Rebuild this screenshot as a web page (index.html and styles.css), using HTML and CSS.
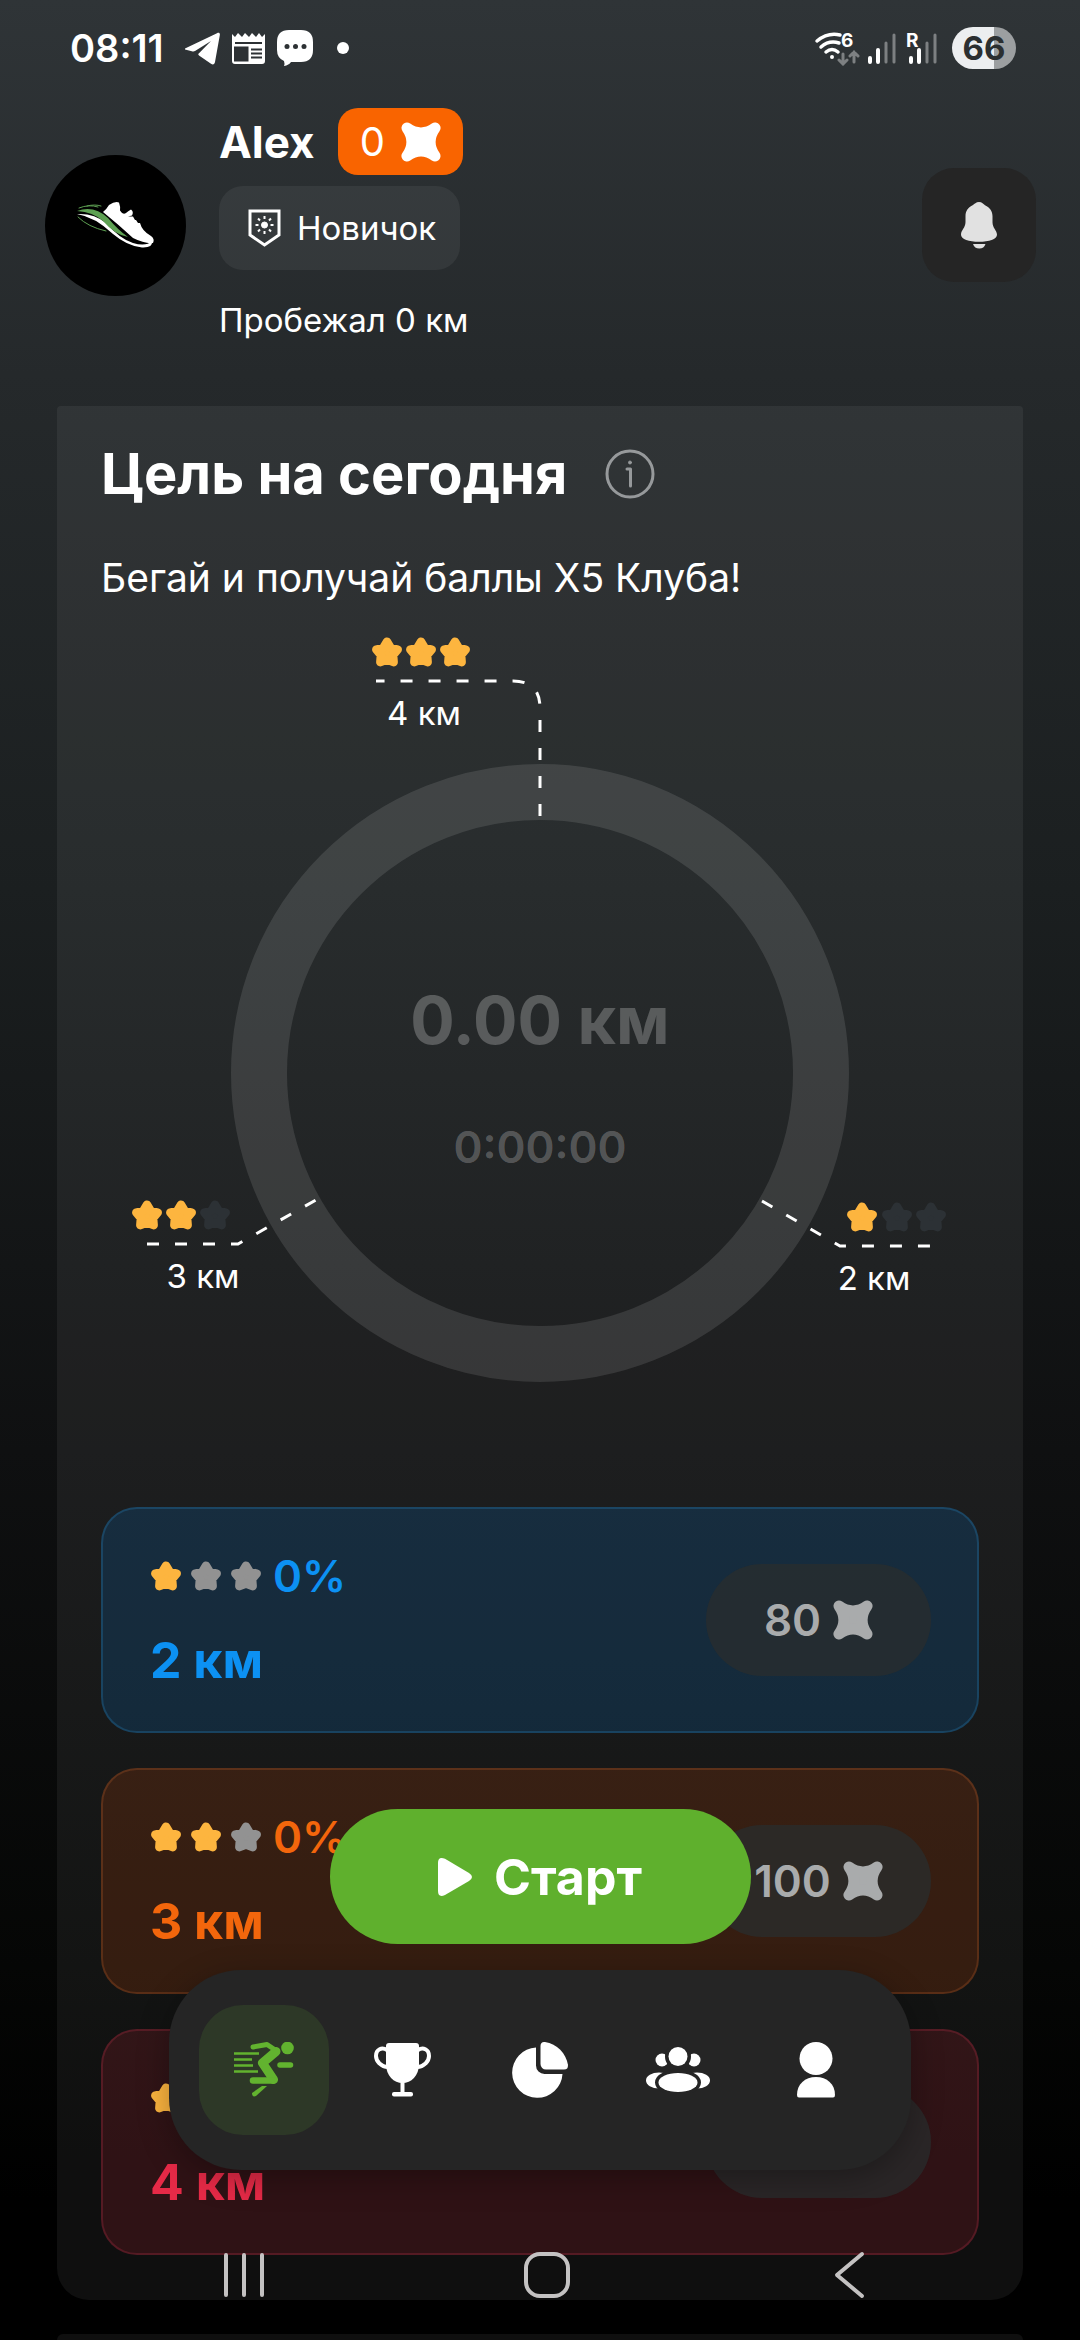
FILE: index.html
```html
<!DOCTYPE html>
<html lang="ru">
<head>
    <title>Цель на сегодня</title>
    <meta charset="UTF-8">
    <meta name="viewport" content="width=device-width, initial-scale=1.0">
    <link rel="stylesheet" href="styles.css">
</head>
<body>
    <!-- общие иконки -->
    <svg class="sprite" aria-hidden="true">
        <symbol id="star" viewBox="1 1 30 30">
            <path d="M16 6.300l3.500 5.800L26 13.700l-4.300 5.200.5 6.600L16 23l-6.200 2.500.5-6.600L6 13.700l6.500-1.600z" fill="currentColor" stroke="currentColor" stroke-width="8" stroke-linejoin="round"/>
        </symbol>
        <symbol id="coin" viewBox="0 0 40 40">
            <path d="M6 6Q20 16 34 6Q24 20 34 34Q20 24 6 34Q16 20 6 6z" fill="currentColor" stroke="currentColor" stroke-width="11" stroke-linejoin="round"/>
        </symbol>
    </svg>

    <div class="app">
        <div class="status-bar">
            <div class="status-group">
                <span class="clock">08:11</span>
                <svg class="status-app" viewBox="0 0 36 36" width="36" height="36" fill="#fff">
                    <path d="M1 18.500L33 3.200c2-1 3.200 0 2.800 2L31 32c-.5 2.500-2 3-4 1.800L15 25.500c-1-.8-1-1.500 0-2.300L27 11 11 21c-1 .6-2 .6-3.200.2L1 19.500z"/>
                </svg>
                <svg class="status-app" viewBox="0 0 33 32" width="33" height="32">
                    <path d="M0 2l3 3 3-4 4 4 3-4 4 4 3-4 4 4 3-4 3 4 3-3v27q0 3-3 3H3q-3 0-3-3z" fill="#fff"/>
                    <path d="M3 11h27M3 15.500h12.500v13H3zM19 17.500h11M19 21.500h11M19 25.500h11" fill="#2d3134" stroke="#2d3134" stroke-width="2"/>
                </svg>
                <svg class="status-app" viewBox="0 0 36 36" width="36" height="36">
                    <path d="M12 0h12q12 0 12 12v8q0 12-12 12H14q-2 3-7 4 1-2 0-5-7-3-7-11v-8Q0 0 12 0z" fill="#fff"/>
                    <g fill="#2d3134"><circle cx="10" cy="16.500" r="2.500"/><circle cx="18.500" cy="16.500" r="2.500"/><circle cx="27" cy="16.500" r="2.500"/></g>
                </svg>
                <span class="status-dot"></span>
            </div>
            <div class="status-group status-right">
                <svg viewBox="0 0 124 36" width="124" height="36" fill="none" stroke-linecap="round">
                    <g stroke="#fff" stroke-width="3.500">
                        <path d="M3 11Q14 2 26 5M7 17q8-7 18-4M12 22q6-5 12 0"/>
                        <circle cx="18" cy="27" r="1" fill="#fff" stroke-width="2"/>
                    </g>
                    <path d="M29 24v10m-4-4l4 4 4-4M40 32V22m-4 4l4-4 4 4" stroke="#7d8082" stroke-width="3"/>
                    <g stroke="#fff" stroke-width="4">
                        <path d="M56 28v4M64 20v12M97 28v4M105 20v12"/>
                    </g>
                    <g stroke="#7d8082" stroke-width="3">
                        <path d="M72 13v19M80 5v27M113 13v19M121 5v27"/>
                    </g>
                    <text x="27" y="17" class="status-mini">6</text>
                    <text x="92" y="17" class="status-mini">R</text>
                </svg>
                <span class="battery">66</span>
            </div>
        </div>

        <header class="header">
            <div class="avatar">
                <svg viewBox="0 0 141 141" fill="none" stroke-linecap="round">
                    <path d="M58 57q3-2 6-7 6-4 10-2.500 1.500 4 1 8 3 5 6 2.500 2-2 5-3.500 3 2 1 6l-4 1h5l2 3.500h-5 6l2 3h-5 7q2 8 11 13 4 3 2 7-8 1-20-5Q74 70 58 57z" fill="#fff"/>
                    <path d="M32 59q17-1 29 9 14 16 27 20 13 4 19-2 1 7-10 6.500Q82 91 68 79 50 62 32 59z" fill="#fff"/>
                    <path d="M32 56q17-6 31 7 10 12 20 19Q70 80 58 66 48 57 32 56z" fill="#5da052"/>
                    <path d="M34 53q10-4 19-1M42 51q8-2 14 0M33 62q10 10 28 14" stroke="#5da052" stroke-width="1"/>
                </svg>
            </div>
            <div class="profile">
                <div class="profile-name">
                    <h1>Alex</h1>
                    <span class="balance">0 <svg><use href="#coin"/></svg></span>
                </div>
                <div class="level">
                    <svg viewBox="0 0 33 38" width="33" height="38" fill="none" stroke="#fff" stroke-width="3">
                        <path d="M2 2h29v24L16.500 36 2 26z"/>
                        <circle cx="16.500" cy="16" r="3" fill="#fff" stroke-width="1"/>
                        <path d="M16.500 7v3M16.500 22v3M7.500 16h3M22.500 16h3M10 9.500l2 2M23 9.500l-2 2M10 22.500l2-2M23 22.500l-2-2" stroke-width="2"/>
                    </svg>
                    Новичок
                </div>
                <p class="distance">Пробежал 0 км</p>
            </div>
            <button class="bell-btn" aria-label="Уведомления">
                <svg viewBox="0 0 36 47" width="36" height="47" fill="#e1e1e1">
                    <path d="M18 0c3 0 4.500 2 6 3.200 5 2.500 7.500 6 7.500 11v6c0 6 4.500 8 4.500 12.500 0 4.500-8 7-18 7s-18-2.500-18-7C0 28 4.500 26 4.500 20v-6c0-5 2.500-8.500 7.500-11C13.500 2 15 0 18 0z"/>
                    <path d="M12 42h12.500c-1 3-3 4.500-6.200 4.500S13 45 12 42z"/>
                </svg>
            </button>
        </header>

        <main class="card">
            <div class="card-title">
                <h2>Цель на сегодня</h2>
                <button class="info-btn" aria-label="Информация">
                    <svg viewBox="0 0 50 50" fill="none" stroke="#96999b" stroke-width="3" stroke-linecap="round" stroke-linejoin="round">
                        <circle cx="25" cy="25" r="23"/>
                        <path d="M22 20h3.500v17"/>
                        <circle cx="25" cy="13.500" r="1.500" fill="#96999b" stroke-width="1"/>
                    </svg>
                </button>
            </div>
            <p class="card-text">Бегай и получай баллы X5 Клуба!</p>

            <svg class="chart" viewBox="0 0 878 787">
                <circle class="chart-ring" cx="439" cy="453" r="281"/>
                <g class="chart-line">
                    <path d="M439 196V88Q439 61 412 61H275"/>
                    <path d="M46 624H137L215 580"/>
                    <path d="M661 581L739 626H830"/>
                </g>
                <g class="star-on">
                    <use href="#star" x="270" y="16" width="32" height="32"/>
                    <use href="#star" x="304" y="16" width="32" height="32"/>
                    <use href="#star" x="338" y="16" width="32" height="32"/>
                    <use href="#star" x="30" y="579" width="32" height="32"/>
                    <use href="#star" x="64" y="579" width="32" height="32"/>
                    <use href="#star" x="745" y="581" width="32" height="32"/>
                </g>
                <g class="star-dim">
                    <use href="#star" x="98" y="579" width="32" height="32"/>
                    <use href="#star" x="780" y="581" width="32" height="32"/>
                    <use href="#star" x="814" y="581" width="32" height="32"/>
                </g>
                <text class="chart-label" x="323" y="105">4 км</text>
                <text class="chart-label" x="102" y="668">3 км</text>
                <text class="chart-label" x="773" y="670">2 км</text>
                <text class="chart-km" x="439" y="424">0.00 км</text>
                <text class="chart-time" x="439" y="543">0:00:00</text>
            </svg>

            <div class="goals">
                <section class="goal goal-blue">
                    <div class="goal-info">
                        <div class="goal-stars">
                            <svg class="star-on"><use href="#star"/></svg>
                            <svg><use href="#star"/></svg>
                            <svg><use href="#star"/></svg>
                            <span>0%</span>
                        </div>
                        <strong>2 км</strong>
                    </div>
                    <div class="reward">80 <svg><use href="#coin"/></svg></div>
                </section>
                <section class="goal goal-orange">
                    <div class="goal-info">
                        <div class="goal-stars">
                            <svg class="star-on"><use href="#star"/></svg>
                            <svg class="star-on"><use href="#star"/></svg>
                            <svg><use href="#star"/></svg>
                            <span>0%</span>
                        </div>
                        <strong>3 км</strong>
                    </div>
                    <div class="reward">100 <svg><use href="#coin"/></svg></div>
                </section>
                <section class="goal goal-red">
                    <div class="goal-info">
                        <div class="goal-stars">
                            <svg class="star-on"><use href="#star"/></svg>
                        </div>
                        <strong>4 км</strong>
                    </div>
                    <div class="reward"></div>
                </section>
            </div>
        </main>
        <section class="card card-next"></section>
    </div>

    <div class="dock">
        <button class="start-btn">
            <svg viewBox="0 0 34 38" width="34" height="38" fill="#fff">
                <path d="M0 5Q0-2 7 .8L31 15q6 4 0 8L7 37Q0 40 0 33z"/>
            </svg>
            Старт
        </button>

        <nav class="tabs">
            <a href="#run" class="active" aria-label="Бег">
                <svg viewBox="0 0 60 56" width="60" height="56" fill="none" stroke="#62b32f" stroke-linecap="round" stroke-linejoin="round">
                    <circle cx="53.500" cy="6" r="6.300" fill="#62b32f" stroke="none"/>
                    <path d="M19 5l14-2.500 9 6" stroke-width="5"/>
                    <path d="M42 9.500L28.500 21l11 16.500" stroke-width="9"/>
                    <path d="M39 38.500H19" stroke-width="6.500"/>
                    <path d="M28 44h5L22 54q-4 1.500-4-3z" fill="#62b32f" stroke="none"/>
                    <path d="M46 23h10.500" stroke-width="5.500"/>
                    <path d="M0 11.500h25M0 17.500h18M0 23.500h19M0 29.500h24" stroke-width="2.500" stroke-linecap="butt"/>
                </svg>
            </a>
            <a href="#awards" aria-label="Награды">
                <svg viewBox="0 0 57 54" width="57" height="54" fill="#fff">
                    <path d="M12 3q0-3 3-3h27q3 0 3 3v18c0 12-8 19-16.500 19S12 33 12 21z"/>
                    <path d="M13 7C8 4 2 6 2 13c0 5 5 11 12 11M44 7c5-3 11-1 11 6 0 5-5 11-12 11" fill="none" stroke="#fff" stroke-width="4"/>
                    <path d="M26.500 38h4v11h-4z"/>
                    <rect x="18" y="49" width="21" height="4.500" rx="2"/>
                </svg>
            </a>
            <a href="#stats" aria-label="Статистика">
                <svg viewBox="0 0 56 56" width="56" height="56" fill="#fff">
                    <path d="M24 5.500A25.200 25.200 0 1 0 50.500 32H32.500A8.500 8.500 0 0 1 24 23.500z"/>
                    <path d="M28.500 4c0-3 2-4.200 4.500-4C45 2 54 11 56 23c0 3-1 4.500-4 4.500H34a5.500 5.500 0 0 1-5.500-5.500z"/>
                </svg>
            </a>
            <a href="#friends" aria-label="Друзья">
                <svg class="people" viewBox="0 0 64 46" width="64" height="46" fill="#fff">
                    <circle cx="16" cy="13" r="6.500"/>
                    <circle cx="48" cy="13" r="6.500"/>
                    <ellipse cx="13" cy="33.500" rx="13" ry="8"/>
                    <ellipse cx="51" cy="33.500" rx="13" ry="8"/>
                    <circle class="cut" cx="32" cy="9.500" r="9.500"/>
                    <ellipse class="cut" cx="32" cy="35.500" rx="19.500" ry="9.500"/>
                </svg>
            </a>
            <a href="#profile" aria-label="Профиль">
                <svg viewBox="0 0 38 56" width="38" height="56" fill="#fff">
                    <circle cx="19" cy="16.500" r="16.500"/>
                    <path d="M0 53C0 42 8 35 19 35s19 7 19 18q0 2.500-2 2.500H2q-2 0-2-2.500z"/>
                </svg>
            </a>
        </nav>

        <div class="system-nav">
            <button aria-label="Недавние">
                <svg viewBox="0 0 48 48"><path d="M6 4v40M24 4v40M42 4v40"/></svg>
            </button>
            <button aria-label="Домой">
                <svg viewBox="0 0 48 48"><rect x="3" y="3" width="42" height="42" rx="14"/></svg>
            </button>
            <button aria-label="Назад">
                <svg viewBox="0 0 48 48"><path d="M37 3L12 24l25 21"/></svg>
            </button>
        </div>
    </div>
</body>
</html>
```
FILE: styles.css
```css
* {
    box-sizing: border-box;
    margin: 0;
    padding: 0;
}

body {
    font-family: Inter, Roboto, "Noto Sans", sans-serif;
    color: #fff;
    background: #000;
}

button {
    font-family: inherit;
    color: inherit;
    border: none;
    background: none;
    cursor: pointer;
}

svg {
    display: block;
    flex-shrink: 0;
}

.sprite {
    position: absolute;
    width: 0;
    height: 0;
}

.app {
    min-height: 100vh;
    display: flex;
    flex-direction: column;
    background: linear-gradient(#2f3437 0%, #25292b 16%, #1b1f20 38%, #0f1011 62%, #050605 84%, #000 94%);
}

/* status bar */
.status-bar {
    height: 96px;
    padding: 0 64px 0 70px;
    display: flex;
    align-items: center;
    justify-content: space-between;
}

.status-group {
    display: flex;
    align-items: center;
}

.clock {
    font-size: 38px;
    font-weight: 600;
    margin-right: 20px;
}

.status-app {
    margin-right: 12px;
}

.status-dot {
    width: 12px;
    height: 12px;
    margin-left: 12px;
    border-radius: 50%;
    background: #fff;
}

.status-right {
    gap: 14px;
}

.status-mini {
    font-size: 19px;
    font-weight: 700;
    fill: #fff;
}

.battery {
    width: 64px;
    height: 42px;
    line-height: 42px;
    text-align: center;
    border-radius: 21px;
    font-size: 33px;
    font-weight: 700;
    color: #2b2f31;
    background: linear-gradient(90deg, #eceef0 65%, #9c9fa1 65%);
}

/* header */
.header {
    display: flex;
    align-items: center;
    padding: 12px 44px 0 45px;
    margin-bottom: 64px;
}

.avatar {
    width: 141px;
    height: 141px;
    margin-right: 33px;
    border-radius: 50%;
    background: #000;
}

.profile {
    flex: 1;
}

.profile-name {
    display: flex;
    align-items: center;
    gap: 23px;
}

.profile-name h1 {
    font-size: 44px;
    font-weight: 700;
}

.balance {
    display: flex;
    align-items: center;
    gap: 16px;
    height: 67px;
    padding: 0 22px;
    border-radius: 20px;
    font-size: 40px;
    background: #f96400;
}

.balance svg,
.reward svg {
    width: 40px;
    height: 40px;
}

.level {
    display: inline-flex;
    align-items: center;
    gap: 16px;
    height: 84px;
    margin-top: 11px;
    padding: 0 24px 0 29px;
    border-radius: 24px;
    font-size: 33px;
    background: rgba(255, 255, 255, 0.06);
}

.distance {
    margin-top: 28px;
    font-size: 33px;
    line-height: 44px;
}

.bell-btn {
    display: flex;
    align-items: center;
    justify-content: center;
    width: 114px;
    height: 114px;
    border-radius: 32px;
    background: #252525;
}

/* goal of the day */
.card {
    margin: 0 57px;
    padding: 32px 44px 45px;
    border-radius: 4px 4px 32px 32px;
    background: rgba(255, 255, 255, 0.06);
}

.card-title {
    display: flex;
    align-items: center;
    gap: 38px;
}

.card-title h2 {
    font-size: 56px;
    line-height: 72px;
    font-weight: 700;
}

.info-btn svg {
    width: 50px;
    height: 50px;
}

.card-text {
    margin-top: 44px;
    font-size: 39px;
    line-height: 48px;
}

.card-next {
    flex: 1;
    margin-top: 34px;
    padding: 0;
    border-radius: 32px 32px 0 0;
}

.chart {
    width: 100%;
    margin-top: 18px;
}

.chart-ring {
    fill: none;
    stroke: rgba(255, 255, 255, 0.11);
    stroke-width: 56px;
}

.chart-line {
    fill: none;
    stroke: #fff;
    stroke-width: 3px;
    stroke-dasharray: 12 16;
}

.chart text {
    text-anchor: middle;
}

.chart-label {
    font-size: 33px;
    fill: #fff;
}

.chart-km,
.chart-time {
    fill: rgba(255, 255, 255, 0.24);
}

.chart-km {
    font-size: 66px;
    font-weight: 700;
}

.chart-time {
    font-size: 44px;
    font-weight: 600;
}

.star-dim {
    color: #2c3135;
}

.goals {
    display: flex;
    flex-direction: column;
    gap: 35px;
    margin-top: 100px;
}

.goal {
    display: flex;
    align-items: center;
    justify-content: space-between;
    height: 226px;
    padding: 0 46px 0 47px;
    border: 2px solid;
    border-radius: 36px;
}

.goal-blue {
    color: #0c91f3;
    background: rgba(0, 140, 255, 0.15);
    border-color: rgba(40, 160, 230, 0.22);
}

.goal-orange {
    color: #f3660c;
    background: rgba(250, 80, 0, 0.15);
    border-color: rgba(240, 120, 50, 0.2);
}

.goal-red {
    color: #e62a47;
    background: rgba(235, 40, 60, 0.15);
    border-color: rgba(235, 60, 90, 0.2);
}

.goal-info {
    display: flex;
    flex-direction: column;
    gap: 32px;
}

.goal-stars {
    display: flex;
    align-items: center;
    gap: 8px;
    height: 48px;
    font-size: 44px;
    font-weight: 600;
}

.goal-stars svg {
    width: 32px;
    height: 32px;
    color: #929292;
}

.goal-stars span {
    margin-left: 3px;
}

.star-on,
.goal-stars .star-on {
    color: #fdb53f;
}

.goal-info strong {
    font-size: 50px;
    line-height: 56px;
    font-weight: 700;
}

.reward {
    display: flex;
    align-items: center;
    justify-content: center;
    gap: 12px;
    width: 225px;
    height: 112px;
    border-radius: 56px;
    font-size: 44px;
    font-weight: 600;
    color: #a9abac;
    background: rgba(42, 46, 46, 0.75);
}

/* everything that floats above the page */
.dock {
    position: fixed;
    left: 0;
    right: 0;
    bottom: 0;
    display: flex;
    flex-direction: column;
    align-items: center;
}

.start-btn {
    display: flex;
    align-items: center;
    justify-content: center;
    gap: 22px;
    width: 421px;
    height: 135px;
    border-radius: 68px;
    font-size: 50px;
    font-weight: 700;
    background: #5fb02d;
}

.tabs {
    display: flex;
    align-items: center;
    gap: 8px;
    height: 200px;
    margin-top: 26px;
    padding: 0 30px;
    border-radius: 72px;
    background: #252525;
    box-shadow: 0 8px 32px rgba(0, 0, 0, 0.3);
}

.tabs a {
    display: flex;
    align-items: center;
    justify-content: center;
    width: 130px;
    height: 130px;
    border-radius: 44px;
}

.tabs .active {
    background: #2d3827;
}

.people .cut {
    stroke: #252525;
    stroke-width: 7px;
    paint-order: stroke;
}

.system-nav {
    display: flex;
    align-items: center;
    justify-content: space-between;
    width: 100%;
    height: 130px;
    margin-top: 40px;
    padding: 0 207px 0 220px;
}

.system-nav svg {
    width: 48px;
    height: 48px;
    fill: none;
    stroke: #c4c2c2;
    stroke-width: 4px;
    stroke-linecap: round;
    stroke-linejoin: round;
}
```
